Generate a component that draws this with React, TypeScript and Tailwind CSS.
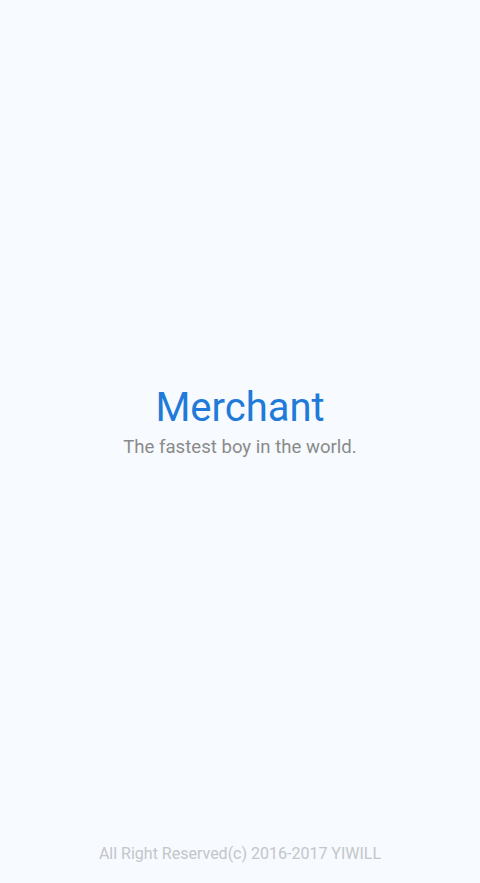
import React from "react";

export default function App() {
  return (
    <div className="w-[480px] h-[883px] bg-[#f7fafe] flex flex-col items-center" style={{ fontFamily: "Roboto, 'Noto Sans', sans-serif" }}>
      <div className="flex-1 flex flex-col items-center justify-center">
        <div className="text-[40px] leading-[44px] text-[#1f7ad9]">Merchant</div>
        <div className="text-[18.6px] leading-[24px] text-[#8a8a8a] mt-[5px]">The fastest boy in the world.</div>
      </div>
      <div className="text-[16px] leading-[20px] text-[#c3c6ca] mb-[19px]">All Right Reserved(c) 2016-2017 YIWILL</div>
    </div>
  );
}
